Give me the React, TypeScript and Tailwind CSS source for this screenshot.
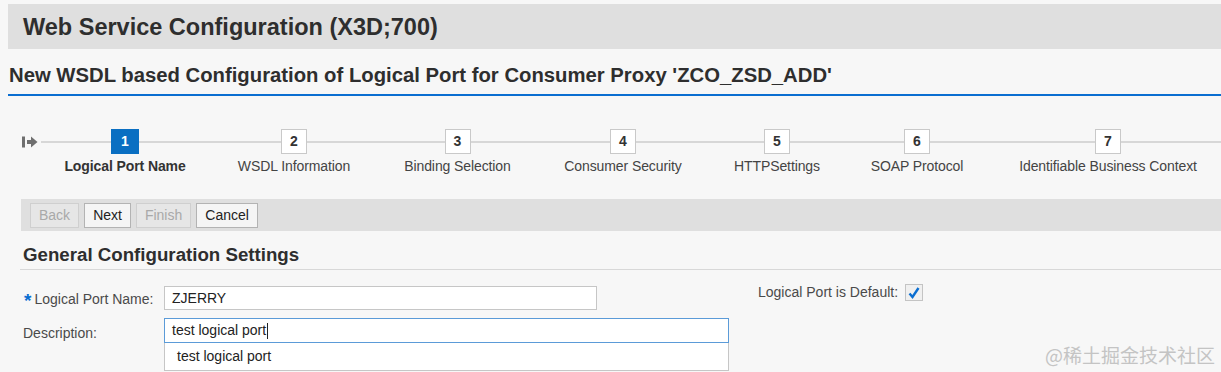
import React from "react";

const steps = [
  { n: "1", label: "Logical Port Name", w: "w-[150px]", active: true },
  { n: "2", label: "WSDL Information", w: "w-[188px]" },
  { n: "3", label: "Binding Selection", w: "w-[139px]" },
  { n: "4", label: "Consumer Security", w: "w-[192px]" },
  { n: "5", label: "HTTPSettings", w: "w-[116px]" },
  { n: "6", label: "SOAP Protocol", w: "w-[164px]" },
  { n: "7", label: "Identifiable Business Context", w: "w-[218px]" },
];

function StartIcon() {
  return (
    <svg width="16" height="12" viewBox="0 0 16 12" className="text-[#6f6f6f]">
      <rect x="0" y="0.5" width="3" height="11" fill="currentColor" />
      <rect x="5" y="4" width="5" height="4" fill="currentColor" />
      <path d="M9 0.5 L15.5 6 L9 11.5 Z" fill="currentColor" />
    </svg>
  );
}

function Btn({ label, disabled }: { label: string; disabled?: boolean }) {
  return (
    <div
      className={
        disabled
          ? "h-[25px] px-[8px] flex items-center border border-[#cfcfcf] bg-[#e6e6e6] text-[#a9a9a9] text-[14px]"
          : "h-[25px] px-[8px] flex items-center border border-[#b3b3b3] bg-[#f5f5f5] text-[#222] text-[14px]"
      }
    >
      {label}
    </div>
  );
}

export default function App() {
  return (
    <div className="relative w-[1221px] h-[372px] overflow-hidden bg-[#f7f7f7] font-['Liberation_Sans',Arial,sans-serif] text-[#333]">
      {/* Header */}
      <div className="pt-[4px] pl-[8px]">
        <div className="h-[45px] bg-[#dfdfdf] flex items-center pl-[15px] pt-[2px] text-[23.5px] font-bold text-[#2e2e2e]">
          Web Service Configuration (X3D;700)
        </div>
        <div className="h-[45px] flex items-center pl-[1px] pt-[8px] text-[20.3px] font-bold text-[#2e2e2e]">
          New WSDL based Configuration of Logical Port for Consumer Proxy 'ZCO_ZSD_ADD'
        </div>
        <div className="h-[2px] bg-[#0a6ed1]" />
      </div>

      {/* Roadmap */}
      <div className="relative mt-[33px] flex">
        <div className="absolute left-[41px] right-0 top-[12px] h-[2px] bg-[#d7d7d7]" />
        <div className="w-[50px] h-[25px] flex items-center pl-[22px]">
          <StartIcon />
        </div>
        {steps.map((s) => (
          <div key={s.n} className={`${s.w} relative flex flex-col items-center`}>
            <div
              className={
                s.active
                  ? "w-[28px] h-[25px] flex items-center justify-center bg-[#0a6fc2] border border-[#0a6fc2] text-white text-[14px] font-bold"
                  : "w-[26px] h-[25px] flex items-center justify-center bg-white border border-[#c9c9c9] text-[#333] text-[14px] font-bold"
              }
            >
              {s.n}
            </div>
            <div
              className={
                s.active
                  ? "mt-[4px] text-[14px] leading-[16px] font-bold text-[#333] whitespace-nowrap tracking-[-0.1px]"
                  : "mt-[4px] text-[14px] leading-[16px] text-[#444] whitespace-nowrap tracking-[-0.1px]"
              }
            >
              {s.label}
            </div>
          </div>
        ))}
      </div>

      {/* Toolbar */}
      <div className="ml-[21px] mt-[25px] h-[32px] bg-[#dfdfdf] flex items-center gap-[5px] pl-[9px]">
        <Btn label="Back" disabled />
        <Btn label="Next" />
        <Btn label="Finish" disabled />
        <Btn label="Cancel" />
      </div>

      {/* Group title */}
      <div className="ml-[23px] h-[38px] pt-[10px] flex items-center text-[18.7px] font-bold text-[#2e2e2e]">
        General Configuration Settings
      </div>
      <div className="ml-[20px] h-px bg-[#d8d8d8]" />

      {/* Form */}
      <div className="mt-[16px] flex items-start">
        <div className="w-[164px] h-[24px] pl-[24px] pt-[2px] flex items-center text-[14px] text-[#4a4a4a]">
          <span className="text-[#0a6ed1] font-bold text-[19px] leading-none mr-[3px] mt-[3px]">*</span>
          Logical Port Name:
        </div>
        <div className="w-[433px] h-[24px] bg-white border border-[#c6c6c6] flex items-center pl-[7px] text-[14px] text-[#222]">
          ZJERRY
        </div>
        <div className="ml-[161px] -mt-[2px] h-[17px] flex items-center text-[14px] text-[#4a4a4a]">
          Logical Port is Default:
          <div className="ml-[7px] w-[18px] h-[17px] border border-[#c4c4c4] bg-[#f0f0f0] flex items-center justify-center">
            <svg width="12" height="12" viewBox="0 0 12 12">
              <path d="M1.5 6.5 L4.5 10 L10.5 1" fill="none" stroke="#0a6ed1" strokeWidth="2.4" />
            </svg>
          </div>
        </div>
      </div>

      <div className="mt-[8px] flex items-start">
        <div className="w-[164px] h-[25px] pl-[23px] pt-[5px] flex items-center text-[14px] text-[#4a4a4a]">
          Description:
        </div>
        <div className="relative">
          <div className="w-[565px] h-[25px] bg-white border border-[#5b9bd8] flex items-center pl-[7px] text-[14px] text-[#222]">
            test logical port
            <span className="ml-[1px] w-px h-[16px] bg-[#222]" />
          </div>
          <div className="absolute left-0 top-[25px] w-[565px] h-[28px] bg-white border border-[#c6c6c6] border-t-0 flex items-center pl-[12px] text-[14px] text-[#222]">
            test logical port
          </div>
        </div>
      </div>

      {/* Watermark */}
      <div className="absolute right-[6px] top-[342px] text-[19px] text-[#c4c4c4] font-['Noto_Sans_CJK_SC',sans-serif] leading-[26px]">
        @稀土掘金技术社区
      </div>
    </div>
  );
}
